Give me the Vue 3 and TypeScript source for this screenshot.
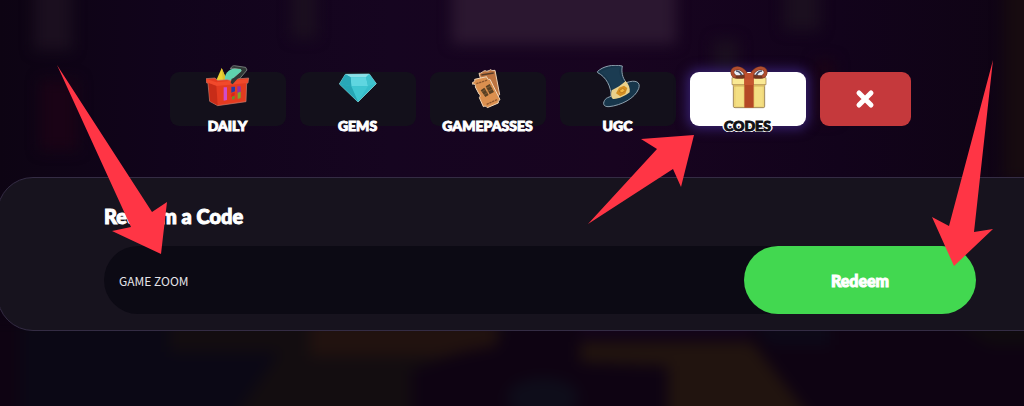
<script setup lang="ts">
import { ref } from 'vue'

type TabId = 'daily' | 'gems' | 'gamepasses' | 'ugc' | 'codes'

interface Tab {
  id: TabId
  label: string
}

const tabs: Tab[] = [
  { id: 'daily', label: 'DAILY' },
  { id: 'gems', label: 'GEMS' },
  { id: 'gamepasses', label: 'GAMEPASSES' },
  { id: 'ugc', label: 'UGC' },
  { id: 'codes', label: 'CODES' },
]

const active = ref<TabId>('codes')
const code = ref('GAME ZOOM')
</script>

<template>
  <div class="scene">
    <svg class="backdrop" viewBox="0 0 1024 406" preserveAspectRatio="none" aria-hidden="true">
      <defs>
        <filter id="soft" x="-20%" y="-50%" width="140%" height="200%" color-interpolation-filters="sRGB">
          <feGaussianBlur stdDeviation="7" />
        </filter>
      </defs>
      <g filter="url(#soft)">
        <path d="M452-20H676V44H452Z" fill="#2b1730" />
        <path d="M34-20H72V50H34ZM292-20H316V38H292ZM784-20H820V30H784ZM714 40H738V90H714Z" fill="#1b0f1f" />
        <path d="M40 80H78V150H40ZM815 60H835V120H815Z" fill="#1a0316" />
        <path d="M1004-20H1050V180H1004Z" fill="#170b10" />
        <path d="M-20 320H1050V430H-20Z" fill="#0e0312" />
        <path d="M20 320H300L230 430H20Z" fill="#0b0815" />
        <path d="M170 320H500V340L412 370V430H225L280 352H170Z" fill="#130d10" />
        <path d="M310 320H497V346L440 356H310Z" fill="#21120f" />
        <path d="M580 342H752L820 430H668V366L580 362Z" fill="#21140f" />
        <path d="M580 320H750V335H580Z" fill="#15041c" />
        <path d="M750 320H830V345H770Z" fill="#0d0918" />
        <path d="M950 320H1050V345H990Z" fill="#100b0f" />
        <ellipse cx="543" cy="398" rx="36" ry="20" fill="#0e0d1a" />
      </g>
    </svg>

    <main class="shop">
      <nav class="tabs" aria-label="Shop sections">
        <button
          v-for="tab in tabs"
          :key="tab.id"
          type="button"
          class="tab"
          :class="{ active: active === tab.id }"
          @click="active = tab.id"
        >
          <svg v-if="tab.id === 'daily'" class="icon" viewBox="35 30 132 132" aria-hidden="true">
            <path d="M64 80 82 39 98 78Z" fill="#ecd233" />
            <path d="M82 39 98 76 86 79Z" fill="#dcc02c" />
            <path d="M92 80C88 54 104 44 122 39L152 38 134 74 110 82Z" fill="#63d5b2" />
            <path d="M108 41C112 34 116 32 120 32L154 37 158 45 126 83 111 86 112 73 141 48 138 43 116 40Z" fill="#303936" stroke="#99a19a" stroke-width="2" />
            <path d="M100 56C108 44 122 40 140 43L141 48 113 72 104 78 94 76Z" fill="#5fd3ae" />
            <path d="M34 71 62 69 70 76 98 74 112 77 126 72 163 69 161 84 157 85 155 140 70 152 46 139 41 85 36 83Z" fill="#e43b20" stroke="#c68172" stroke-width="2" />
            <path d="M43 84 66 91 70 151 47 138Z" fill="#c82c18" />
            <path d="M37 72 66 82 162 72 160 84 67 93 38 82Z" fill="#f1492b" />
            <path d="M134 66 115 88 109 84 112 71Z" fill="#303936" />
            <path d="M88 97h10v38l-10 2Z" fill="#cf4ccb" />
            <path d="M111 95h11v14l-11 4Z" fill="#243caa" />
            <path d="M111 116l10-4v9l-10 5Z" fill="#d8251a" />
            <path d="M113 125l8-3v10l-8 2Z" fill="#6d8f24" />
            <path d="M129 94h10v17l-10 5Z" fill="#9430a6" />
            <path d="M130 113l9-3v19l-9 3Z" fill="#7fa52b" />
          </svg>
          <svg v-else-if="tab.id === 'gems'" class="icon" viewBox="530 45 132 132" aria-hidden="true">
            <path d="M558 73 630 72 651 101 596 156 540 102Z" fill="#35bdca" stroke="#9ae5e7" stroke-width="2" stroke-linejoin="round" />
            <path d="M558 73 630 72 620 82 574 82Z" fill="#8be0e7" />
            <path d="M574 82 620 82 626 108 576 109Z" fill="#5fd6e0" />
            <path d="M558 73 574 82 576 109 541 102Z" fill="#28a7b7" />
            <path d="M630 72 650 101 626 108 620 82Z" fill="#3fc3ce" />
            <path d="M576 109 626 108 596 155Z" fill="#3fc6d1" />
            <path d="M541 102 576 109 596 155Z" fill="#27a6b5" />
          </svg>
          <svg v-else-if="tab.id === 'gamepasses'" class="icon" viewBox="18 30 132 132" aria-hidden="true">
            <path d="M57 55C65 56 68 48 75 47 81 51 87 47 92 44 96 48 101 46 105 46L119 119C113 122 112 127 114 132L79 130Z" fill="#bd7440" stroke="#efd1b3" stroke-width="3" stroke-linejoin="round" />
            <path d="M64 60 101 54" stroke="#563b28" stroke-width="5" />
            <path d="M38 82C43 82 45 77 44 73L80 65C81 71 85 75 90 73L120 134C115 136 114 140 115 144L82 158C78 153 75 153 70 155L58 128C62 123 61 119 57 117L46 96C48 89 43 85 38 88Z" fill="#db904f" stroke="#f1d7b9" stroke-width="3" stroke-linejoin="round" />
            <path d="M49 86 83 75M80 148 111 134" stroke="#8e582f" stroke-width="4" stroke-dasharray="7 2" />
            <path d="M77 94 89 87 102 111 89 118ZM62 106 73 98 86 120 76 126Z" fill="#594023" />
            <path d="M78 100 95 92M83 109 99 102M67 110 77 103M73 119 83 112" stroke="#93683b" stroke-width="2" />
          </svg>
          <svg v-else-if="tab.id === 'ugc'" class="icon" viewBox="15 30 132 132" aria-hidden="true">
            <path d="M19 50 C35 34 65 27 94 33 C91 49 93 67 106 83 C134 73 150 81 143 101 C132 130 91 151 54 155 C35 156 35 143 43 133 C46 129 52 127 60 124 C61 96 46 66 20 53Z" fill="#17364b" stroke="#8fa1af" stroke-width="3" />
            <path d="M28 52C49 39 70 36 87 36 82 53 88 69 100 86L63 107C60 84 49 64 28 52Z" fill="#1b3c52" />
            <path d="M62 106C78 98 91 90 104 78 113 87 118 99 116 112 103 122 83 133 66 132 59 128 60 116 62 106Z" fill="#ead18b" />
            <path d="M75 115 84 98 99 92 109 99 103 116 88 124Z" fill="#d49022" />
            <path d="M84 108 95 100 103 106 93 114Z" fill="#f0b53e" stroke="#a96819" stroke-width="2" />
          </svg>
          <svg v-else class="icon" viewBox="165 45 132 132" aria-hidden="true">
            <path d="M187 101h94v68q0 4-4 4h-85q-5 0-5-4Z" fill="#eed577" stroke="#745b38" stroke-width="2" />
            <path d="M183 83h102v21H183Z" fill="#fae994" stroke="#9e7a46" stroke-width="2" />
            <path d="M187 105h94v5h-94Z" fill="#d9ba63" />
            <path d="M194 110h23v58h-23ZM252 110h23v58h-23Z" fill="#f4df83" />
            <path d="M220 78h28v95h-28Z" fill="#b44825" />
            <path d="M220 82h28v23h-28Z" fill="#c65630" />
            <g fill="#e8ecf5" stroke="#71351f" stroke-width="11">
              <path d="M227 78C222 60 204 51 191 56 180 62 183 77 194 80 207 83 218 80 227 78Z" />
              <path d="M241 78C246 60 264 51 277 56 288 62 285 77 274 80 261 83 250 80 241 78Z" />
            </g>
            <g fill="none" stroke="#b14e30" stroke-width="8">
              <path d="M227 78C222 60 204 51 191 56 180 62 183 77 194 80" />
              <path d="M241 78C246 60 264 51 277 56 288 62 285 77 274 80" />
            </g>
            <path d="M195 63q12 0 17 13M273 63q-12 0-17 13" fill="none" stroke="#4a4f66" stroke-width="5" />
            <path d="M221 69h26v20h-26Z" fill="#c04e2d" />
          </svg>
          <span class="label">{{ tab.label }}</span>
        </button>
        <button type="button" class="close" aria-label="Close">
          <svg viewBox="0 0 20 20" aria-hidden="true">
            <path d="M4 4 16 16M16 4 4 16" />
          </svg>
        </button>
      </nav>

      <section class="panel">
        <label class="title" for="code">Redeem a Code</label>
        <form class="field" @submit.prevent>
          <input id="code" v-model="code" type="text" autocomplete="off" spellcheck="false" />
          <button type="submit" class="redeem">Redeem</button>
        </form>
      </section>
    </main>

    <svg class="arrows" viewBox="0 0 1024 406" aria-hidden="true">
      <path d="M57 65 152 212 167 202 161 254 112 231 131 227Z" />
      <path d="M588 224 657 149 641 139 694 135 681 187 673 169Z" />
      <path d="M993 60 949 226 932 217 954 266 993 229 974 232Z" />
    </svg>
  </div>
</template>

<style>
body {
  margin: 0;
  background: #0e0415;
}
</style>

<style scoped>
.scene {
  position: relative;
  min-height: 100vh;
  overflow: hidden;
  box-sizing: border-box;
  padding-top: 66px;
  font-family: Lato, "Liberation Sans", sans-serif;
  background: linear-gradient(90deg, #0d0413 0, #11041b 16%, #160520 38%, #180420 60%, #12031b 82%, #0f0414 100%);
}

.backdrop {
  position: absolute;
  inset: 0;
  width: 100%;
  height: 100%;
}

/* The shop is wider than the viewport, so it runs off the right edge. */
.shop {
  position: relative;
  margin-right: -56px;
}

.tabs {
  display: flex;
  justify-content: center;
  gap: 14px;
  padding-top: 6px;
  margin-bottom: 51px;
}

.tab,
.close {
  height: 54px;
  padding: 0;
  border: 0;
  border-radius: 9px;
  font: inherit;
  cursor: pointer;
}

.tab {
  display: flex;
  flex-direction: column;
  align-items: center;
  width: 116px;
  background: #13101b;
  color: #fff;
}

.icon {
  flex: none;
  width: 44px;
  height: 44px;
  margin-top: -7px;
}

.label {
  margin-top: 9px;
  font-size: 14px;
  line-height: 16px;
  font-weight: 900;
  -webkit-text-stroke: 1px currentColor;
}

.tab.active {
  background: #fff;
  color: #101014;
  box-shadow: 0 0 12px 3px #36206f;
}

.tab.active .label {
  text-shadow:
    -2px 0 #fff, 2px 0 #fff, 0 -1px #fff, 0 1px #fff,
    -1px -1px #fff, 1px -1px #fff, -1px 1px #fff, 1px 1px #fff;
}

.close {
  display: flex;
  align-items: center;
  justify-content: center;
  width: 91px;
  background: #c5393c;
}

.close svg {
  width: 20px;
  height: 20px;
  fill: none;
  stroke: #fff;
  stroke-width: 5;
  stroke-linecap: round;
}

.panel {
  margin: 0 -3px;
  padding: 24px 106px 16px;
  border: 1px solid #342c44;
  border-radius: 36px;
  background: #17131e;
}

.title {
  display: block;
  margin-bottom: 16px;
  color: #fff;
  font-size: 20px;
  line-height: 28px;
  font-weight: 900;
  -webkit-text-stroke: 1px #fff;
}

.field {
  display: flex;
  height: 68px;
  border-radius: 34px;
  background: #0c0a14;
}

.field input {
  flex: 1;
  min-width: 0;
  padding: 0 15px;
  border: 0;
  outline: 0;
  background: none;
  color: #e4e3e8;
  font: 12px "Noto Sans CJK SC", sans-serif;
}

.redeem {
  width: 232px;
  border: 0;
  border-radius: 34px;
  background: #42d850;
  color: #fff;
  font: inherit;
  font-size: 16px;
  font-weight: 900;
  -webkit-text-stroke: 1px #fff;
  cursor: pointer;
}

.arrows {
  position: absolute;
  top: 0;
  left: 0;
  width: 1024px;
  height: 406px;
  fill: #ff3545;
  pointer-events: none;
}
</style>
